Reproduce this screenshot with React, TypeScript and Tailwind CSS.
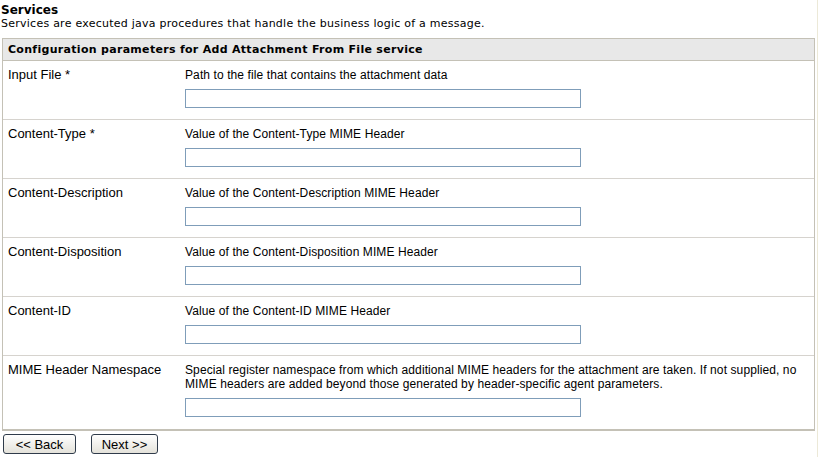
import React from "react";

const rows: { label: string; desc: React.ReactNode; tall?: boolean }[] = [
  { label: "Input File *", desc: "Path to the file that contains the attachment data" },
  { label: "Content-Type *", desc: "Value of the Content-Type MIME Header" },
  { label: "Content-Description", desc: "Value of the Content-Description MIME Header" },
  { label: "Content-Disposition", desc: "Value of the Content-Disposition MIME Header" },
  { label: "Content-ID", desc: "Value of the Content-ID MIME Header" },
  {
    label: "MIME Header Namespace",
    desc: (
      <>
        Special register namespace from which additional MIME headers for the attachment are taken. If not supplied, no
        <br />
        MIME headers are added beyond those generated by header-specific agent parameters.
      </>
    ),
    tall: true,
  },
];

export default function App() {
  return (
    <div className="flex h-[457px] w-[818px] bg-white text-black">
      <div className="w-[817px]">
        <div className="pl-[1px] pt-[3px] font-['DejaVu_Sans',Verdana,sans-serif]">
          <div className="text-[12px] font-bold leading-[14px]">Services</div>
          <div className="text-[11px] leading-[13px] tracking-[0.25px]">
            Services are executed java procedures that handle the business logic of a message.
          </div>
        </div>
        <div className="ml-[2px] mt-[8px] w-[813px] border border-b-2 border-[#c4c1b6]">
          <div className="h-[22px] border-b border-[#c4c1b6] bg-[#e8e8e8] pl-[5px] font-['DejaVu_Sans',Verdana,sans-serif] text-[11px] font-bold leading-[21px] tracking-[0.3px]">
            Configuration parameters for Add Attachment From File service
          </div>
          {rows.map((r, i) => (
            <div
              key={r.label}
              className={
                "grid grid-cols-[182px_1fr] font-['Liberation_Sans',Arial,sans-serif] " +
                (i > 0 ? "border-t border-[#d6d3ce]" : "")
              }
            >
              <div className="pl-[5px] pt-[7px] text-[13px] leading-[14px]">{r.label}</div>
              <div className={r.tall ? "pb-[12px] pt-[7px]" : "pb-[11px] pt-[7px]"}>
                <div className="whitespace-nowrap text-[12px] leading-[14px] tracking-[0.1px]">{r.desc}</div>
                <div className="mt-[7px] h-[19px] w-[396px] border border-[#7f9db9] bg-white" />
              </div>
            </div>
          ))}
        </div>
        <div className="ml-[3px] mt-[3px] flex gap-[15px] font-['Liberation_Sans',Arial,sans-serif] text-[13px]">
          <button className="flex h-[20px] w-[73px] items-center justify-center rounded-[3px] border border-[#2f3b4a] bg-linear-to-b from-white to-[#e4e2da] leading-none text-black">
            &lt;&lt; Back
          </button>
          <button className="flex h-[20px] w-[67px] items-center justify-center rounded-[3px] border border-[#2f3b4a] bg-linear-to-b from-white to-[#e4e2da] leading-none text-black">
            Next &gt;&gt;
          </button>
        </div>
      </div>
      <div className="w-px bg-[#ece9d8]" />
    </div>
  );
}
